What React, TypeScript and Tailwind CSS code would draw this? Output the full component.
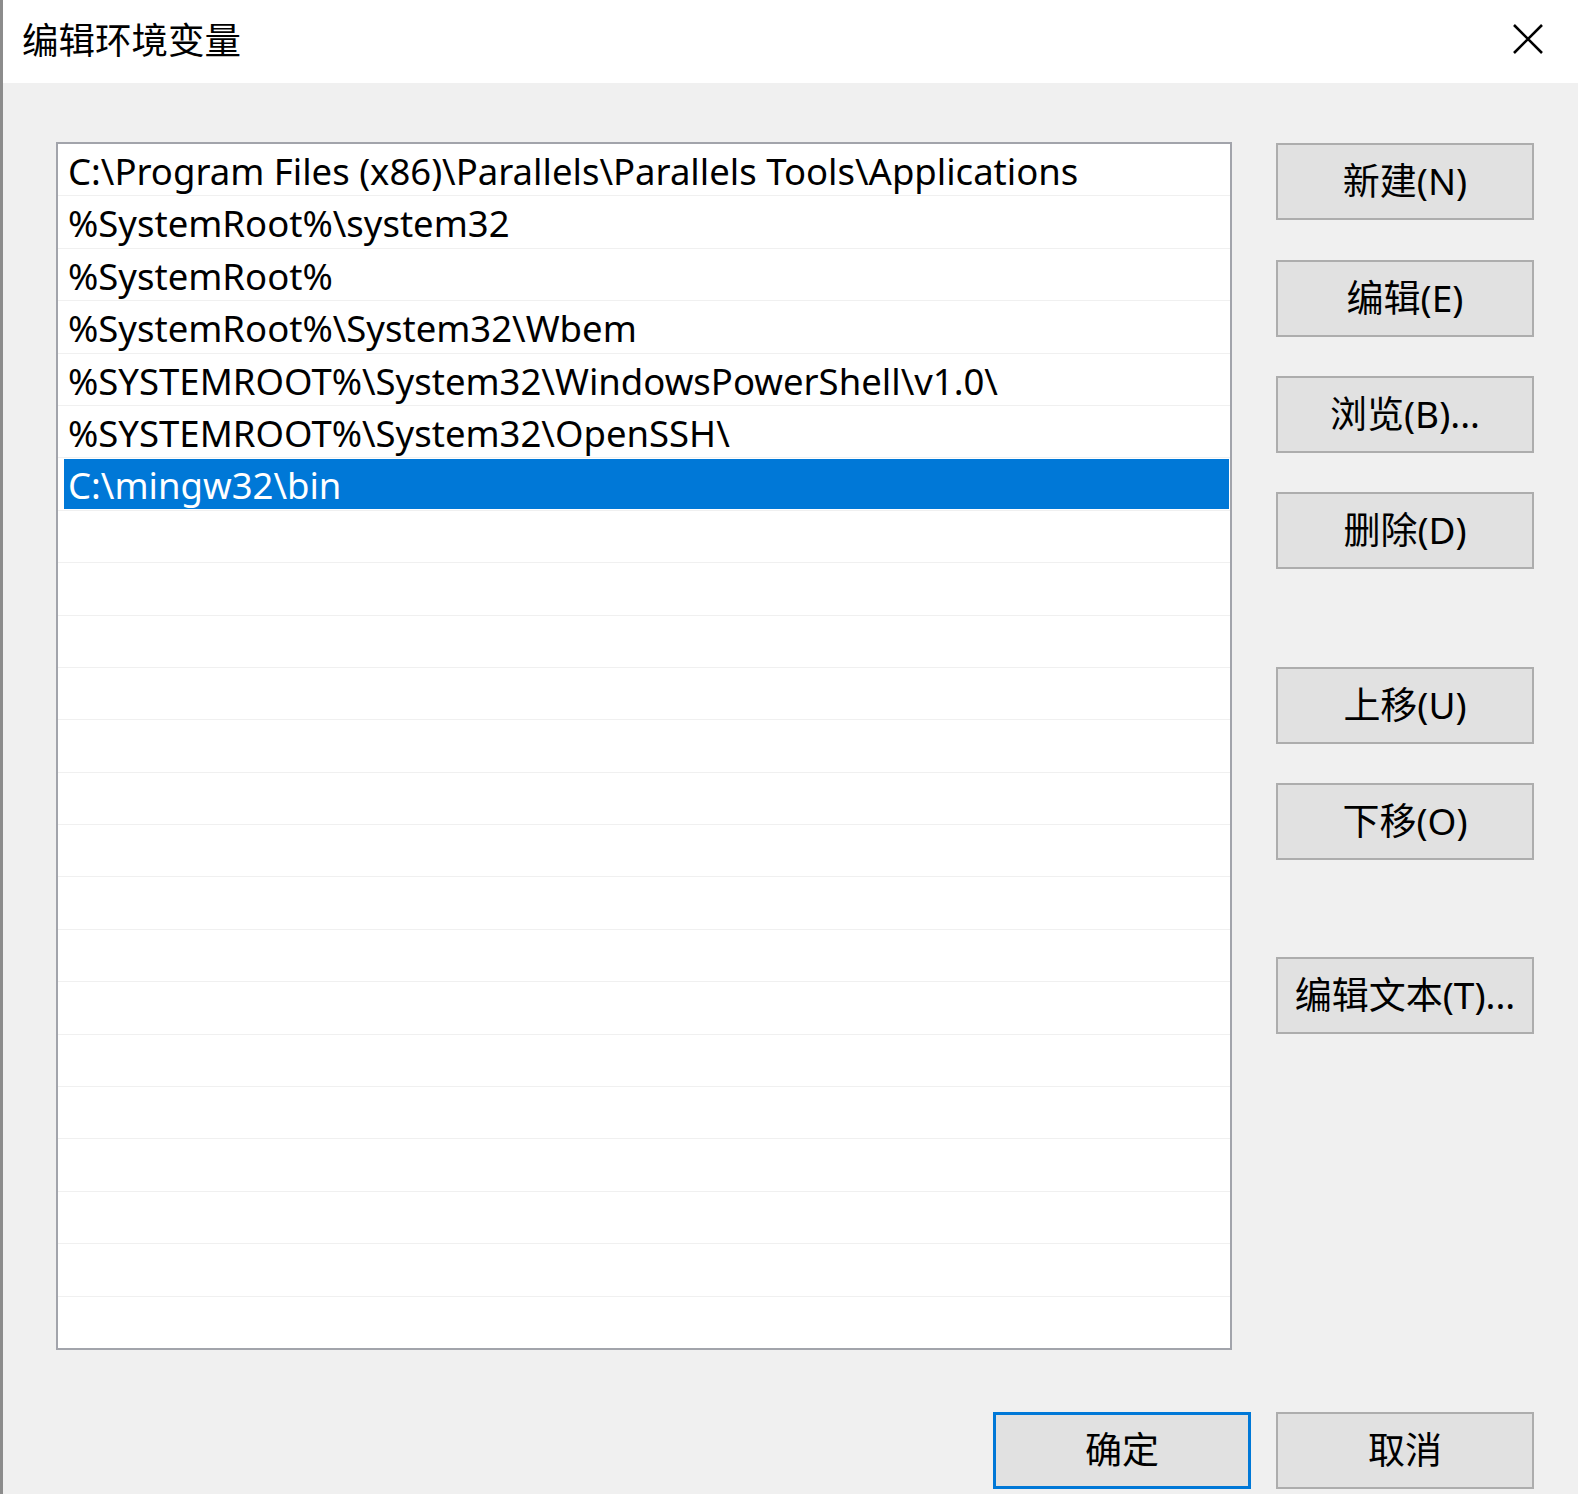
import React from "react";

const FONT = '"Noto Sans", "Noto Sans CJK SC", sans-serif';

const items = [
  "C:\\Program Files (x86)\\Parallels\\Parallels Tools\\Applications",
  "%SystemRoot%\\system32",
  "%SystemRoot%",
  "%SystemRoot%\\System32\\Wbem",
  "%SYSTEMROOT%\\System32\\WindowsPowerShell\\v1.0\\",
  "%SYSTEMROOT%\\System32\\OpenSSH\\",
  "C:\\mingw32\\bin",
];

function Btn({ label, primary, className = "" }: { label: string; primary?: boolean; className?: string }) {
  return (
    <div
      className={
        "w-[258px] h-[77px] flex items-center justify-center bg-[#e1e1e1] text-[37px] text-black leading-none " +
        (primary ? "border-[3px] border-[#0078d7] " : "border-2 border-[#adadad] ") +
        className
      }
    >
      <span className="pb-[2px]">{label}</span>
    </div>
  );
}

export default function App() {
  const rows = Array.from({ length: 23 }, (_, i) => items[i] ?? "");
  return (
    <div
      className="w-[1578px] h-[1494px] flex flex-col border-l-[3px] border-[#8c8c8c] bg-[#f0f0f0] overflow-hidden"
      style={{ fontFamily: FONT }}
    >
      <div className="h-[83px] bg-white flex items-center justify-between pl-[19px] pr-[35px] shrink-0">
        <div className="text-[36.5px] text-black leading-none pb-[2px]">编辑环境变量</div>
        <svg width="30" height="30" viewBox="0 0 30 30" className="mt-[-6px]">
          <path d="M1 1 L29 29 M29 1 L1 29" stroke="#000" strokeWidth="2.6" />
        </svg>
      </div>
      <div className="flex-1 flex flex-col pl-[53px]">
        <div className="flex pt-[59px]">
          <div className="w-[1176px] h-[1208px] bg-white border-2 border-[#a2a4ab] overflow-hidden">
            {rows.map((t, i) => {
              const sel = i === 6;
              return (
                <div key={i} className="h-[52.4px] border-b border-[#f0f0f0] flex items-stretch">
                  <div
                    className={
                      "flex-1 ml-[6px] mr-[1px] pl-[4px] pt-[3px] flex items-center text-[36.5px] leading-none whitespace-nowrap " +
                      (sel ? "bg-[#0078d7] text-white my-[1px]" : "text-black")
                    }
                  >
                    {t}
                  </div>
                </div>
              );
            })}
          </div>
          <div className="flex flex-col ml-[44px] pt-[1px]">
            <Btn label="新建(N)" />
            <Btn label="编辑(E)" className="mt-[40px]" />
            <Btn label="浏览(B)..." className="mt-[39px]" />
            <Btn label="删除(D)" className="mt-[39px]" />
            <Btn label="上移(U)" className="mt-[98px]" />
            <Btn label="下移(O)" className="mt-[39px]" />
            <Btn label="编辑文本(T)..." className="mt-[97px]" />
          </div>
        </div>
        <div className="flex mt-[62px] ml-[937px] gap-[25px]">
          <Btn label="确定" primary />
          <Btn label="取消" />
        </div>
      </div>
    </div>
  );
}
